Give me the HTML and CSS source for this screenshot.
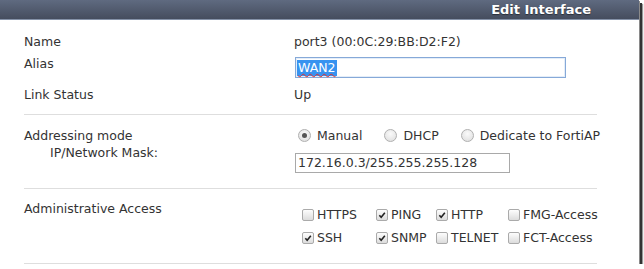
FILE: index.html
```html
<!DOCTYPE html>
<html lang="en">
<head>
  <meta charset="UTF-8" />
  <title>Edit Interface</title>
  <link rel="stylesheet" href="styles.css">
</head>
<body>

  <div class="frame">
    <div class="titlebar">Edit Interface</div>

    <div class="content">
      <div class="group group-info">
        <div class="row row-name">
          <span class="label">Name</span>
          <span class="value">port3 (00:0C:29:BB:D2:F2)</span>
        </div>
        <div class="row row-alias">
          <span class="label">Alias</span>
          <div class="textbox textbox-focus"><span class="sel">WAN2</span></div>
        </div>
        <div class="row">
          <span class="label">Link Status</span>
          <span class="value">Up</span>
        </div>
      </div>

      <div class="group group-addr">
        <div class="labels">
          <div class="label">Addressing mode</div>
          <div class="label label-sub">IP/Network Mask:</div>
        </div>
        <div class="values">
          <div class="radios">
            <label class="opt"><span class="radio checked"></span>Manual</label>
            <label class="opt"><span class="radio"></span>DHCP</label>
            <label class="opt"><span class="radio"></span>Dedicate to FortiAP</label>
          </div>
          <div class="textbox textbox-ip">172.16.0.3/255.255.255.128</div>
        </div>
      </div>

      <div class="group group-access">
        <div class="label">Administrative Access</div>
        <div class="checks">
          <label class="opt"><span class="box"></span>HTTPS</label>
          <label class="opt"><span class="box checked"><svg viewBox="0 0 12 12"><path d="M2.8 6.2 L5 8.6 L9.4 3.2"/></svg></span>PING</label>
          <label class="opt"><span class="box checked"><svg viewBox="0 0 12 12"><path d="M2.8 6.2 L5 8.6 L9.4 3.2"/></svg></span>HTTP</label>
          <label class="opt"><span class="box"></span>FMG-Access</label>
          <label class="opt"><span class="box checked"><svg viewBox="0 0 12 12"><path d="M2.8 6.2 L5 8.6 L9.4 3.2"/></svg></span>SSH</label>
          <label class="opt"><span class="box checked"><svg viewBox="0 0 12 12"><path d="M2.8 6.2 L5 8.6 L9.4 3.2"/></svg></span>SNMP</label>
          <label class="opt"><span class="box"></span>TELNET</label>
          <label class="opt"><span class="box"></span>FCT-Access</label>
        </div>
      </div>
    </div>
  </div>

</body>
</html>
```

FILE: styles.css
```css
* {
  box-sizing: border-box;
  margin: 0;
  padding: 0;
}

body {
  font-family: 'DejaVu Sans', Verdana, sans-serif;
  font-size: 12.5px;
  line-height: 15px;
  color: #333;
  background: #fff;
}

.frame {
  width: 639px;
  height: 264px;
  background: #fff;
  box-shadow: 1px 1px 0 #8a8a8a, 3px 3px 0 #333, 4px 4px 1px #999;
}

.titlebar {
  height: 20px;
  line-height: 19px;
  padding-right: 48px;
  text-align: right;
  font-size: 13px;
  font-weight: bold;
  color: #fff;
  text-shadow: 0 1px 1px #2a2f3a;
  background: linear-gradient(#5f6a80, #454d5e);
  border-bottom: 1px solid #8592a8;
}

.content {
  padding: 0 42px 0 24px;
}

.group {
  border-bottom: 1px solid #dedede;
}

.row {
  display: grid;
  grid-template-columns: 270px 1fr;
}

.group-info {
  padding: 14px 0 12px;
}

.row-name {
  height: 22px;
}

.row-alias {
  height: 31px;
}

.textbox {
  height: 20px;
  border: 1px solid #a9a9a9;
  padding: 1px 2px;
  line-height: 16px;
  background: #fff;
}

.textbox-focus {
  width: 271px;
  height: 21px;
  margin: 1px 0 0 1px;
  border-color: #86a9d8;
  box-shadow: inset 0 0 0 1px #e4edf8;
  padding: 2px 1px;
}

.sel {
  display: inline-block;
  padding: 0 1px;
  background: #3793f0;
  color: #fff;
  text-decoration: underline wavy #e03030;
  text-decoration-thickness: 1px;
  text-underline-offset: 1px;
}

.group-addr {
  display: grid;
  grid-template-columns: 270px 1fr;
  padding: 13px 0 15px;
}

.label-sub {
  margin-top: 2px;
  padding-left: 26px;
}

.radios {
  display: flex;
  padding-left: 4px;
}

.opt {
  display: inline-flex;
  align-items: center;
  white-space: nowrap;
}

.radios .opt {
  gap: 6px;
  margin-right: 22px;
}

.radio {
  width: 13px;
  height: 13px;
  border-radius: 50%;
  border: 1px solid #b0b0b0;
  background: radial-gradient(circle at 50% 35%, #fafafa, #dcdcdc);
  position: relative;
}

.radio.checked::after {
  content: "";
  position: absolute;
  left: 3px;
  top: 3px;
  width: 5px;
  height: 5px;
  border-radius: 50%;
  background: #555;
}

.textbox-ip {
  width: 215px;
  margin: 10px 0 0 1px;
}

.group-access {
  padding: 12px 0 18px;
  display: grid;
  grid-template-columns: 270px 1fr;
}

.checks {
  margin-top: 6px;
  padding-left: 8px;
  display: grid;
  grid-template-columns: 74px 60px 72px auto;
  row-gap: 8px;
}

.checks .opt {
  gap: 3px;
}

.box {
  width: 12px;
  height: 12px;
  border: 1px solid #aaa;
  border-radius: 2px;
  background: linear-gradient(#fdfdfd, #dcdcdc);
}

.box svg {
  display: block;
  width: 10px;
  height: 10px;
  fill: none;
  stroke: #222;
  stroke-width: 1.9;
}
```
